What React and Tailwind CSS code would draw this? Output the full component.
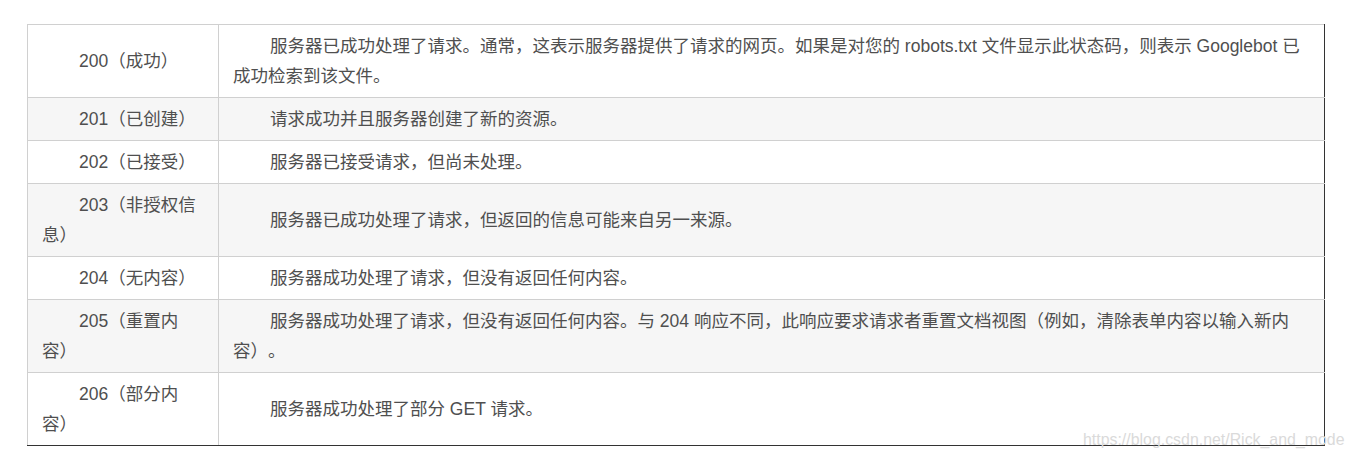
const rows = [
  ['200（成功）', '服务器已成功处理了请求。通常，这表示服务器提供了请求的网页。如果是对您的 robots.txt 文件显示此状态码，则表示 Googlebot 已成功检索到该文件。'],
  ['201（已创建）', '请求成功并且服务器创建了新的资源。'],
  ['202（已接受）', '服务器已接受请求，但尚未处理。'],
  ['203（非授权信息）', '服务器已成功处理了请求，但返回的信息可能来自另一来源。'],
  ['204（无内容）', '服务器成功处理了请求，但没有返回任何内容。'],
  ['205（重置内容）', '服务器成功处理了请求，但没有返回任何内容。与 204 响应不同，此响应要求请求者重置文档视图（例如，清除表单内容以输入新内容）。'],
  ['206（部分内容）', '服务器成功处理了部分 GET 请求。'],
];

export default function App() {
  return (
    <div
      className="relative w-[1354px] h-[459px] bg-white pl-[27px] pt-[24px] text-[17.5px] leading-[30px] text-[#4f4f4f] [text-spacing-trim:space-all]"
      style={{ fontFamily: '"Liberation Sans", Arial, "Noto Sans CJK SC", sans-serif' }}
    >
      <table className="w-[1298px] table-fixed border-collapse">
        <colgroup>
          <col className="w-[191px]" />
          <col />
        </colgroup>
        <tbody>
          {rows.map(([code, desc], i) => {
            const last = i === rows.length - 1;
            return (
              <tr key={code} className={i % 2 === 1 ? 'bg-[#f6f6f6]' : 'bg-white'}>
                <td
                  className={`border border-[#d0d0d0] px-[14px] py-[6px] indent-[37px] align-middle ${
                    last ? 'border-b-[#333]' : ''
                  }`}
                >
                  {code}
                </td>
                <td
                  className={`border border-[#d0d0d0] border-r-[#333] px-[14px] py-[6px] indent-[37px] align-middle ${
                    last ? 'border-b-[#333]' : ''
                  }`}
                >
                  {desc}
                </td>
              </tr>
            );
          })}
        </tbody>
      </table>
      <div className="absolute left-[1083px] top-[429px] text-[15.9px] leading-[22px] text-[#dadada]">
        https://blog.csdn.net/Rick_and_mode
      </div>
    </div>
  );
}
